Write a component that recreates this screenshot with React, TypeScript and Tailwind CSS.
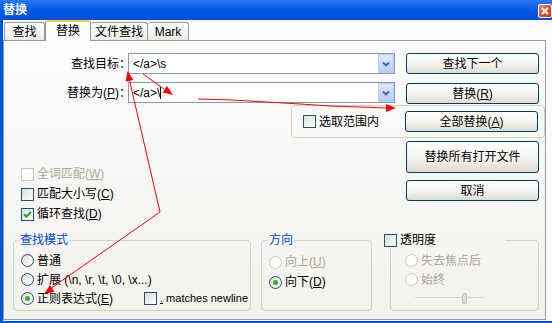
import React from "react";

function Checkbox({ checked, disabled }: { checked?: boolean; disabled?: boolean }) {
  return (
    <span
      className={
        disabled
          ? "w-[13px] h-[13px] shrink-0 border border-[#cac8bb] bg-white flex items-center justify-center"
          : "w-[13px] h-[13px] shrink-0 border border-[#1c5180] bg-linear-to-br from-[#dcdcd7] to-white flex items-center justify-center"
      }
    >
      {checked && (
        <svg width="9" height="9" viewBox="0 0 9 9">
          <path d="M1 4.2 L3.4 6.6 L8 2" stroke="#21a121" strokeWidth="2" fill="none" />
        </svg>
      )}
    </span>
  );
}

function Radio({ checked, disabled }: { checked?: boolean; disabled?: boolean }) {
  return (
    <span
      className={
        disabled
          ? "w-[13px] h-[13px] shrink-0 rounded-full border border-[#cac8bb] bg-white flex items-center justify-center"
          : "w-[13px] h-[13px] shrink-0 rounded-full border border-[#1c5180] bg-linear-to-br from-[#dcdcd7] to-white flex items-center justify-center"
      }
    >
      {checked && <span className="w-[5px] h-[5px] rounded-full bg-[#2bb32b]" />}
    </span>
  );
}

function Btn({ children, tall }: { children: React.ReactNode; tall?: boolean }) {
  return (
    <div
      className={
        tall
          ? "w-[133px] h-[32px] shrink-0 border border-[#003c74] rounded-[3px] bg-linear-to-b from-white via-[#f6f5f1] to-[#dedbcf] flex items-center justify-center text-[12px] leading-none"
          : "w-[133px] h-[21px] shrink-0 border border-[#003c74] rounded-[3px] bg-linear-to-b from-white via-[#f6f5f1] to-[#dedbcf] flex items-center justify-center text-[12px] leading-none"
      }
    >
      {children}
    </div>
  );
}

function U({ c }: { c: string }) {
  return (
    <>
      (<span className="underline">{c}</span>)
    </>
  );
}

function Combo({ children }: { children: React.ReactNode }) {
  return (
    <div className="w-[267px] h-[21px] shrink-0 border border-[#7f9db9] bg-white flex items-center">
      <div className="flex-1 pl-[4px] text-[12px] leading-none flex items-center">{children}</div>
      <div className="w-[16px] h-[19px] border border-[#bccbef] bg-linear-to-b from-[#dfe8fd] to-[#b9cbf5] flex items-center justify-center">
        <svg width="8" height="6" viewBox="0 0 8 6">
          <path d="M1 1.5 L4 4.5 L7 1.5" stroke="#4d6185" strokeWidth="1.8" fill="none" />
        </svg>
      </div>
    </div>
  );
}

function head(tx: number, ty: number, fx: number, fy: number, len = 10, w = 4) {
  const dx = tx - fx;
  const dy = ty - fy;
  const L = Math.hypot(dx, dy);
  const ux = dx / L;
  const uy = dy / L;
  const bx = tx - ux * len;
  const by = ty - uy * len;
  return `${tx},${ty} ${bx - uy * w},${by + ux * w} ${bx + uy * w},${by - ux * w}`;
}

export default function App() {
  return (
    <div className="relative w-[552px] h-[323px] overflow-hidden bg-[#0053e1] font-[family-name:'Liberation_Sans','Noto_Sans_CJK_SC',sans-serif] text-[12px] text-black">
      {/* title bar */}
      <div className="h-[20px] flex items-center justify-between bg-linear-to-b from-[#2a78f2] via-[#0057e6] to-[#004fd9]">
        <span className="pl-[3px] text-white font-bold text-[12px] leading-none">替换</span>
        <div className="w-[14px] h-[14px] mt-[2px] rounded-[2px] border border-white bg-linear-to-br from-[#e98a6f] via-[#e0502c] to-[#c9401c] flex items-center justify-center">
          <svg width="8" height="8" viewBox="0 0 8 8">
            <path d="M1 1 L7 7 M7 1 L1 7" stroke="white" strokeWidth="2" />
          </svg>
        </div>
      </div>

      {/* body */}
      <div className="ml-[3px] h-[301px] bg-[#fcfcfe] flex flex-col">
        {/* tabs */}
        <div className="h-[21px] -mb-[1px] pl-[1px] flex items-end relative z-10">
          <div className="w-[41px] h-[18px] mb-[1px] border border-b-0 border-[#919b9c] rounded-t-[3px] bg-linear-to-b from-white to-[#ecebe6] flex items-center justify-center leading-none">
            查找
          </div>
          <div className="w-[46px] h-[21px] border-x border-[#919b9c] border-t-[2px] border-t-[#ffc83c] rounded-t-[3px] bg-[#fcfcfe] flex items-center justify-center leading-none pb-[1px]">
            替换
          </div>
          <div className="w-[57px] h-[18px] mb-[1px] border border-b-0 border-l-0 border-[#919b9c] rounded-t-[3px] bg-linear-to-b from-white to-[#ecebe6] flex items-center justify-center leading-none">
            文件查找
          </div>
          <div className="w-[41px] h-[18px] mb-[1px] border border-b-0 border-l-0 border-[#919b9c] rounded-t-[3px] bg-linear-to-b from-white to-[#ecebe6] flex items-center justify-center leading-none">
            Mark
          </div>
        </div>

        {/* panel */}
        <div className="w-[543px] h-[280px] border border-[#919b9c] bg-linear-to-b from-[#fcfcfe] to-[#f3f2ec] flex flex-col pt-[12px]">
          {/* row 1 */}
          <div className="flex h-[21px] items-center">
            <div className="w-[127px] shrink-0 text-right leading-none whitespace-nowrap">查找目标：</div>
            <div className="-ml-[3px]">
              <Combo>{"</a>\\s"}</Combo>
            </div>
            <div className="ml-[11px]">
              <Btn>查找下一个</Btn>
            </div>
          </div>
          {/* row 2 */}
          <div className="flex h-[22px] items-start mt-[8px]">
            <div className="w-[127px] shrink-0 h-[21px] flex items-center justify-end leading-none whitespace-nowrap">
              替换为<U c="P" />：
            </div>
            <div className="-ml-[3px]">
              <Combo>
                {"</a>\\"}
                <span className="inline-block w-[1px] h-[13px] bg-black" />
              </Combo>
            </div>
            <div className="ml-[11px] mt-[1px]">
              <Btn>
                替换<U c="R" />
              </Btn>
            </div>
          </div>
          {/* selection group */}
          <div className="mt-[1px] ml-[287px] w-[254px] h-[33px] border border-[#d0d0bf] rounded-[4px] flex items-center">
            <div className="w-[113px] pl-[11px] flex items-center">
              <Checkbox />
              <span className="ml-[3px] leading-none">选取范围内</span>
            </div>
            <Btn>
              全部替换<U c="A" />
            </Btn>
          </div>
          {/* middle */}
          <div className="flex h-[94px]">
            <div className="w-[402px] pt-[26px] pl-[17px] flex flex-col">
              <div className="h-[20px] flex items-center">
                <Checkbox disabled />
                <span className="ml-[3px] leading-none text-[#aca899]">
                  全词匹配<U c="W" />
                </span>
              </div>
              <div className="h-[20px] flex items-center">
                <Checkbox />
                <span className="ml-[3px] leading-none">
                  匹配大小写<U c="C" />
                </span>
              </div>
              <div className="h-[20px] flex items-center">
                <Checkbox checked />
                <span className="ml-[3px] leading-none">
                  循环查找<U c="D" />
                </span>
              </div>
            </div>
            <div className="flex flex-col">
              <div className="mt-[3px]">
                <Btn tall>替换所有打开文件</Btn>
              </div>
              <div className="mt-[7px]">
                <Btn>取消</Btn>
              </div>
            </div>
          </div>
          {/* bottom groups */}
          <div className="flex h-[79px]">
            <fieldset className="ml-[9px] w-[238px] min-w-0 h-[79px] shrink-0 border border-[#d0d0bf] rounded-[4px]">
              <legend className="ml-[5px] px-[1px] leading-[16px] text-[#0046d5]">查找模式</legend>
              <div className="pt-[3px] pl-[7px] flex flex-col">
                <div className="h-[19px] flex items-center">
                  <Radio />
                  <span className="ml-[3px] leading-none">普通</span>
                </div>
                <div className="h-[19px] flex items-center">
                  <Radio />
                  <span className="ml-[3px] leading-none whitespace-nowrap">
                    扩展 <span className="text-[12px]">(\n, \r, \t, \0, \x...)</span>
                  </span>
                </div>
                <div className="h-[19px] flex items-center whitespace-nowrap">
                  <Radio checked />
                  <span className="ml-[3px] w-[107px] shrink-0 leading-none">
                    正则表达式<U c="E" />
                  </span>
                  <Checkbox />
                  <span className="ml-[3px] leading-none text-[11px] whitespace-nowrap">
                    <span className="underline">.</span> matches newline
                  </span>
                </div>
              </div>
            </fieldset>
            <fieldset className="ml-[10px] w-[111px] min-w-0 h-[79px] shrink-0 border border-[#d0d0bf] rounded-[4px]">
              <legend className="ml-[6px] px-[1px] leading-[16px] text-[#0046d5]">方向</legend>
              <div className="pt-[4px] pl-[7px] flex flex-col">
                <div className="h-[20px] flex items-center">
                  <Radio disabled />
                  <span className="ml-[3px] leading-none text-[#aca899]">
                    向上<U c="U" />
                  </span>
                </div>
                <div className="h-[20px] flex items-center">
                  <Radio checked />
                  <span className="ml-[3px] leading-none">
                    向下<U c="D" />
                  </span>
                </div>
              </div>
            </fieldset>
            <fieldset className="ml-[18px] w-[149px] min-w-0 h-[79px] shrink-0 border border-[#d0d0bf] rounded-[4px]">
              <legend className="-ml-[7px] w-[121px] h-[16px] flex items-center">
                <Checkbox />
                <span className="ml-[3px] leading-none">透明度</span>
              </legend>
              <div className="pt-[3px] pl-[14px] flex flex-col">
                <div className="h-[19px] flex items-center">
                  <Radio disabled />
                  <span className="ml-[3px] leading-none text-[#aca899]">失去焦点后</span>
                </div>
                <div className="h-[19px] flex items-center">
                  <Radio disabled />
                  <span className="ml-[3px] leading-none text-[#aca899]">始终</span>
                </div>
                <div className="h-[19px] flex items-center">
                  <div className="ml-[10px] relative w-[70px] h-[3px] border-t border-[#d3d1c6] border-b border-b-white bg-[#efeee8]">
                    <div className="absolute left-[47px] -top-[5px] w-[5px] h-[11px] rounded-[2px] border border-[#c4c2b8] bg-[#e0ded6]" />
                  </div>
                </div>
              </div>
            </fieldset>
          </div>
        </div>
      </div>

      {/* annotation arrows */}
      <svg className="absolute left-0 top-0 pointer-events-none" width="552" height="323" viewBox="0 0 552 323">
        <g stroke="#ff0000" strokeWidth="1" fill="none">
          <polyline points="160,212 129,78" />
          <polyline points="160,212 50,289" />
          <polyline points="143,74 164,89" />
          <polyline points="198,99 232,100 267,102 300,104 330,106 388,108" />
        </g>
        <g fill="#ff0000">
          <polygon points={head(127.5, 71, 131, 88)} />
          <polygon points={head(44, 294, 60, 283)} />
          <polygon points={head(173, 95, 160, 86)} />
          <polygon points={head(396, 108, 384, 108)} />
        </g>
      </svg>
    </div>
  );
}
